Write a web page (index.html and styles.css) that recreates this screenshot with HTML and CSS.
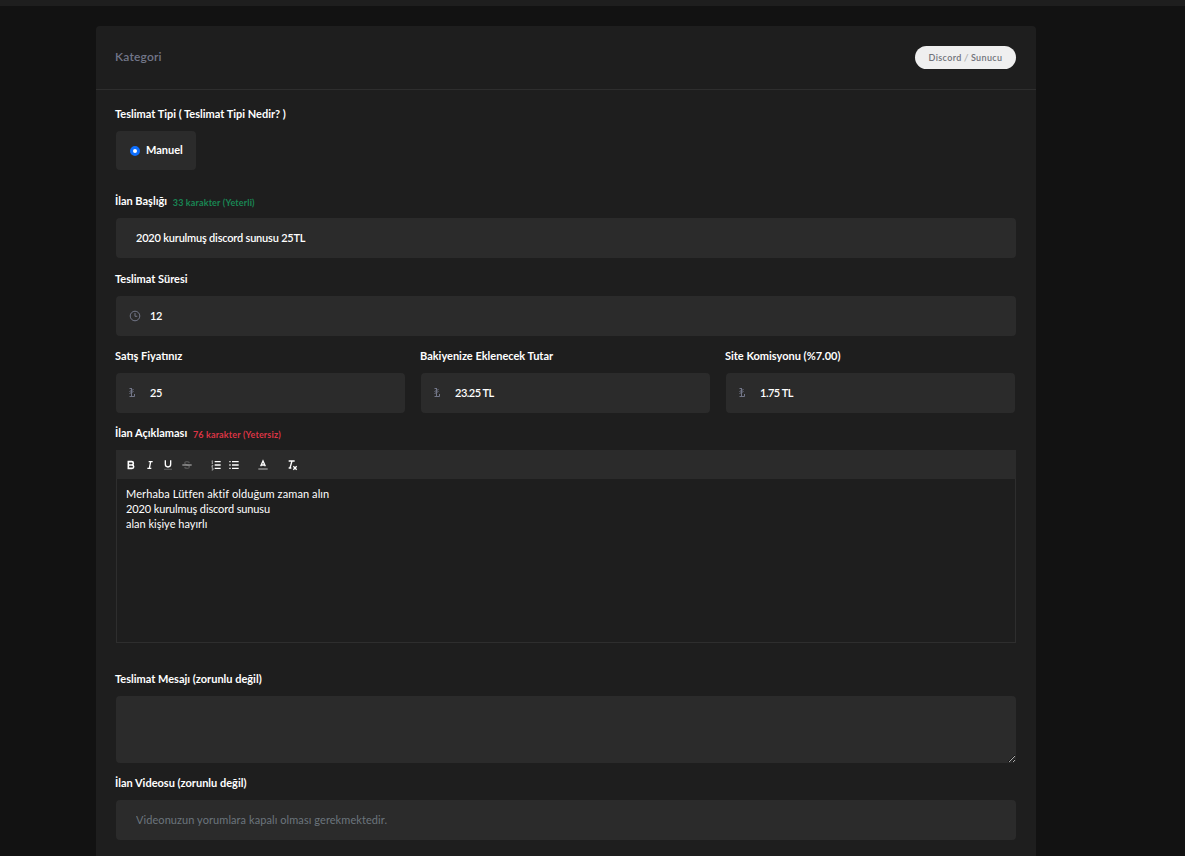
FILE: index.html
```html
<!doctype html>
<html lang="tr">
<head>
<meta charset="UTF-8">
<title>İlan Ekle</title>
<link rel="stylesheet" href="styles.css">
</head>

<body>
<div class="topbar"></div>

<div class="card">
	<div class="card-header">
		<span class="card-title">Kategori</span>
		<span class="badge">Discord <i>/</i> Sunucu</span>
	</div>

	<form class="card-body">
		<div class="field field-type">
			<div class="label">Teslimat Tipi ( Teslimat Tipi Nedir? )</div>
			<label class="radio-box">
				<input type="radio" name="type" checked>
				<span class="radio-dot"></span>
				<span>Manuel</span>
			</label>
		</div>

		<div class="field field-title">
			<div class="label">İlan Başlığı <small class="ok">33 karakter (Yeterli)</small></div>
			<input class="input" type="text" value="2020 kurulmuş discord sunusu 25TL">
		</div>

		<div class="field">
			<div class="label">Teslimat Süresi</div>
			<div class="input input-icon">
				<svg class="icon-clock" viewBox="0 0 12 12"><circle cx="6" cy="6" r="4.8"/><path d="M6 3v3.3h2.3"/></svg>
				<span>12</span>
			</div>
		</div>

		<div class="row">
			<div class="field">
				<div class="label">Satış Fiyatınız</div>
				<div class="input input-icon">
					<svg class="icon-lira" viewBox="0 0 12 12"><path d="M1.500 2.500h2M3.500 2v8M1.500 5.500L5.500 3.500M1.500 7.500L5.500 5.500M1.500 10.500h5V8"/></svg>
					<span>25</span>
				</div>
			</div>
			<div class="field">
				<div class="label">Bakiyenize Eklenecek Tutar</div>
				<div class="input input-icon">
					<svg class="icon-lira" viewBox="0 0 12 12"><path d="M1.500 2.500h2M3.500 2v8M1.500 5.500L5.500 3.500M1.500 7.500L5.500 5.500M1.500 10.500h5V8"/></svg>
					<span>23.25 TL</span>
				</div>
			</div>
			<div class="field">
				<div class="label">Site Komisyonu (%7.00)</div>
				<div class="input input-icon">
					<svg class="icon-lira" viewBox="0 0 12 12"><path d="M1.500 2.500h2M3.500 2v8M1.500 5.500L5.500 3.500M1.500 7.500L5.500 5.500M1.500 10.500h5V8"/></svg>
					<span>1.75 TL</span>
				</div>
			</div>
		</div>

		<div class="field field-editor">
			<div class="label">İlan Açıklaması <small class="bad">76 karakter (Yetersiz)</small></div>
			<div class="toolbar">
				<div class="tools">
					<svg viewBox="0 0 18 18"><path class="thick" d="M5 4h5a2.500 2.500 0 0 1 0 5H5zM5 9h5.500a2.500 2.500 0 0 1 0 5H5z"/></svg>
					<svg viewBox="0 0 18 18"><path d="M7 4h6M5 14h6M8 14l2-10"/></svg>
					<svg viewBox="0 0 18 18"><path d="M5 2v6a4 4 0 0 0 8 0V2"/><path class="dim" d="M3 15.500h12"/></svg>
					<svg viewBox="0 0 18 18"><path class="dim" d="M12.500 6C12 3.500 6 3 5.500 6c0 1.500 1 2.300 3.500 3M9 9c3 .7 3.700 1.700 3.500 3-.5 3-6.500 2.600-7 0"/><path class="mid" d="M2 9h14"/></svg>
				</div>
				<div class="tools tools-list">
					<svg viewBox="0 0 18 18"><path d="M7 4h9M7 9h9M7 14h9"/><path class="thin" d="M2.500 6.500h2M3.500 6.500v-4l-1 .6M2.500 9.500h2l-2 2.500h2M2.500 13.500h2v3h-2"/></svg>
					<svg viewBox="0 0 18 18"><path d="M6 4h10M6 9h10M6 14h10M2 4h2M2 9h2M2 14h2"/></svg>
				</div>
				<div class="tools">
					<svg viewBox="0 0 18 18"><path d="M5.500 11L9 3l3.500 8M6.500 9h5"/><path class="mid" d="M2 15h14"/></svg>
				</div>
				<div class="tools">
					<svg viewBox="0 0 18 18"><path d="M4 3h9M6 13.500L9 3M4 13.500h4M11 11l5 5M16 11l-5 5"/></svg>
				</div>
			</div>
			<div class="editor">
				<p class="wide">Merhaba Lütfen aktif olduğum zaman alın</p>
				<p class="tight">2020 kurulmuş discord sunusu</p>
				<p>alan kişiye hayırlı</p>
			</div>
		</div>

		<div class="field">
			<div class="label">Teslimat Mesajı (zorunlu değil)</div>
			<textarea class="input textarea"></textarea>
		</div>

		<div class="field">
			<div class="label">İlan Videosu (zorunlu değil)</div>
			<input class="input" type="text" placeholder="Videonuzun yorumlara kapalı olması gerekmektedir.">
		</div>
	</form>
</div>
</body>
</html>
```
FILE: styles.css
```css
* {
	box-sizing: border-box;
}
body {
	margin: 0;
	height: 856px;
	overflow: hidden;
	background-color: #121212;
	color: white;
	font-family: Lato, "Open Sans", sans-serif;
	font-size: 11px;
}
.topbar {
	height: 6px;
	background: #1e1e1e;
}
.card {
	width: 940px;
	height: 850px;
	margin: 20px 0 0 96px;
	background: #1e1e1e;
	border-radius: 4px 4px 0 0;
}
.card-header {
	display: flex;
	justify-content: space-between;
	align-items: center;
	height: 64px;
	padding: 0 20px;
	border-bottom: 1px solid #2e2e2e;
}
.card-title {
	margin-left: -1px;
	padding-bottom: 2px;
	color: #727688;
	font-size: 12px;
	font-weight: 600;
	letter-spacing: 0.2px;
}
.badge {
	width: 101px;
	height: 23px;
	line-height: 24px;
	text-align: center;
	border-radius: 12px;
	background: #efefef;
	color: #70727a;
	font-size: 9px;
	font-weight: 600;
	letter-spacing: 0.35px;
}
.badge i {
	color: #aaa;
}
.card-body {
	padding: 15px 20px 0;
}
.field {
	margin-bottom: 11px;
}
.field-type {
	margin-bottom: 22px;
}
.field-title {
	margin-bottom: 12px;
}
.field-editor {
	margin-bottom: 27px;
}
.label {
	height: 18px;
	margin: 0 0 8px -1px;
	line-height: 18px;
	font-weight: bold;
	white-space: nowrap;
}
.label small {
	margin-left: 3px;
	font-size: 9px;
	letter-spacing: 0.15px;
	position: relative;
	top: 1px;
}
.ok {
	color: #198754;
}
.bad {
	color: #dc3545;
}
.radio-box {
	display: flex;
	align-items: center;
	width: 80px;
	height: 39px;
	padding: 0 0 3px 14px;
	border-radius: 4px;
	background: #2b2b2b;
	font-weight: bold;
}
.radio-box input {
	display: none;
}
.radio-dot {
	width: 10px;
	height: 10px;
	margin: 3px 6px 0 0;
	border: 3px solid #0d6efd;
	border-radius: 50%;
	background: white;
}
.input {
	display: block;
	width: 100%;
	height: 40px;
	padding: 0 20px 2px;
	border: 0;
	border-radius: 4px;
	outline: none;
	background: #2b2b2b;
	color: white;
	font-family: inherit;
	font-size: 11px;
	font-weight: 600;
	letter-spacing: -0.2px;
}
.input::placeholder {
	color: #6c757d;
	font-weight: normal;
	letter-spacing: 0.07px;
}
.input-icon {
	display: flex;
	align-items: center;
	padding: 0 0 2px 13px;
	letter-spacing: -0.5px;
}
.input-icon svg {
	width: 12px;
	height: 12px;
	margin-right: 9px;
	fill: none;
	stroke: #727688;
}
.icon-lira {
	position: relative;
	left: -1px;
}
.icon-clock {
	position: relative;
	top: 1px;
}
.row {
	display: grid;
	grid-template-columns: repeat(3, 289px);
	gap: 16px;
}
.toolbar {
	display: flex;
	align-items: center;
	gap: 17px;
	height: 29px;
	padding-left: 9px;
	background: #2b2b2b;
}
.tools {
	display: flex;
	gap: 6.600px;
}
.tools-list {
	gap: 6px;
}
.tools svg {
	width: 12px;
	height: 12px;
	fill: none;
	stroke: white;
	stroke-width: 2;
}
.tools .thick {
	stroke-width: 2.4;
}
.tools .thin {
	stroke-width: 0.8;
}
.tools .dim {
	stroke: #555;
}
.tools .mid {
	stroke: #999;
}
.editor {
	height: 164px;
	padding: 7px 9px;
	border: 1px solid #2e2e2e;
	border-top: 0;
	line-height: 15px;
}
.editor p {
	margin: 0;
}
.editor .wide {
	letter-spacing: 0.1px;
}
.editor .tight {
	letter-spacing: -0.12px;
}
.textarea {
	height: 67px;
	resize: vertical;
}
```
